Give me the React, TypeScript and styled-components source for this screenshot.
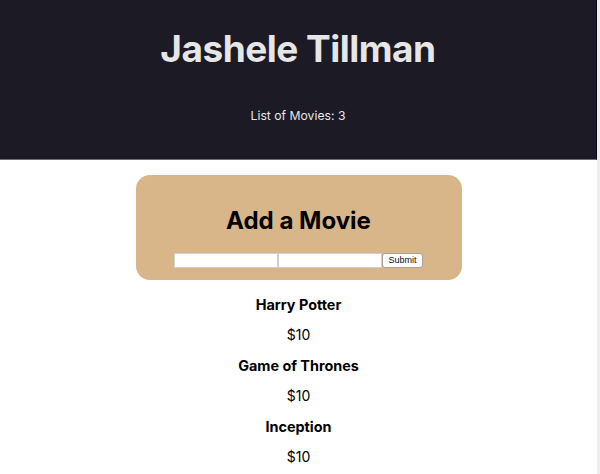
import React from "react";
import styled, { createGlobalStyle } from "styled-components";

const Global = createGlobalStyle`
  html, body { margin: 0; padding: 0; background: #eeeeee; }
  body { font-family: Inter, "Noto Sans", Arial, sans-serif; }
  #root { width: 597px; min-height: 474px; background: #ffffff; }
`;

const Header = styled.header`
  height: 160px;
  background: #1b1a25;
  border-bottom: 1px solid #6c6b78;
  border-right: 1px solid #0b0b10;
  box-sizing: border-box;
  display: flex;
  flex-direction: column;
  align-items: center;
  color: #e6e6e6;
`;

const Title = styled.h1`
  margin: 25px 0 0;
  font-size: 37px;
  line-height: 48px;
  font-weight: 700;
  letter-spacing: -0.5px;
`;

const Count = styled.p`
  margin: 34px 0 0;
  font-size: 12.2px;
  line-height: 18px;
  font-weight: 400;
`;

const Main = styled.main`
  display: flex;
  flex-direction: column;
  align-items: center;
  padding-top: 15px;
`;

const Card = styled.section`
  width: 326px;
  height: 105px;
  box-sizing: border-box;
  background: #d8b68a;
  border-radius: 14px;
  display: flex;
  flex-direction: column;
  align-items: center;
  padding-top: 31px;
`;

const CardTitle = styled.h2`
  margin: 0;
  font-size: 24px;
  line-height: 30px;
  font-weight: 700;
  color: #000;
`;

const Form = styled.form`
  display: flex;
  margin-top: 17px;
  height: 15px;
`;

const Input = styled.input`
  width: 104px;
  height: 15px;
  box-sizing: border-box;
  border: 1px solid #cfcfcf;
  background: #fff;
  padding: 0 2px;
  margin: 0;
  font-size: 9px;
  outline: none;
`;

const Button = styled.button`
  width: 41px;
  height: 15px;
  box-sizing: border-box;
  margin: 0;
  padding: 0;
  border: 1px solid #a8a29a;
  border-radius: 3px;
  background: #fcfcfc;
  font-family: "Liberation Sans", Arial, sans-serif;
  font-size: 9px;
  line-height: 13px;
  color: #111;
`;

const List = styled.ul`
  list-style: none;
  margin: 10px 0 0;
  padding: 0;
  display: flex;
  flex-direction: column;
  align-items: center;
`;

const Item = styled.li`
  display: flex;
  flex-direction: column;
  align-items: center;
`;

const MovieName = styled.h3`
  margin: 0;
  font-size: 14.4px;
  line-height: 30.4px;
  font-weight: 700;
  color: #000;
`;

const Price = styled.p`
  margin: 0;
  font-size: 14px;
  line-height: 30.4px;
  color: #000;
`;

const movies = [
  { name: "Harry Potter", price: 10 },
  { name: "Game of Thrones", price: 10 },
  { name: "Inception", price: 10 },
];

export default function App() {
  return (
    <>
      <Global />
      <Header>
        <Title>Jashele Tillman</Title>
        <Count>List of Movies: {movies.length}</Count>
      </Header>
      <Main>
        <Card>
          <CardTitle>Add a Movie</CardTitle>
          <Form onSubmit={(e) => e.preventDefault()}>
            <Input type="text" />
            <Input type="text" />
            <Button type="submit">Submit</Button>
          </Form>
        </Card>
        <List>
          {movies.map((m) => (
            <Item key={m.name}>
              <MovieName>{m.name}</MovieName>
              <Price>${m.price}</Price>
            </Item>
          ))}
        </List>
      </Main>
    </>
  );
}
